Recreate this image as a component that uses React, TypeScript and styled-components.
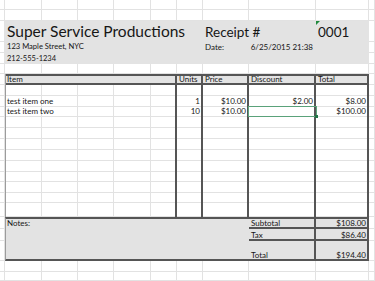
import { Fragment } from 'react'
import styled, { createGlobalStyle } from 'styled-components'

type Edge = 'thick' | 'thin'

type SpanProps = {
  $rows: string
  $cols: string
}

type RegionProps = SpanProps & {
  $shade?: boolean
  $top?: Edge
  $bottom?: Edge
  $left?: Edge
  $right?: Edge
}

type TextProps = SpanProps & {
  $align?: 'left' | 'right'
  $valign?: 'top' | 'bottom'
  $size?: number
}

const colWidths = [5, 37, 36, 36, 37, 26, 26, 46, 67, 53, 6]
const rowHeights = [10, 11, 21, 11, 11, 10, 11, 11, 11, 10, 11, 11, 11, 11, 11, 10, 11, 10, 14, 12, 12, 20, 11, 9]

const shade = '#e3e3e3'
const line = (e?: Edge) =>
  e === 'thick' ? '2px solid #555555' : e === 'thin' ? '1px solid #9c9c9c' : 'none'

const GlobalStyle = createGlobalStyle`
  html, body {
    margin: 0;
    padding: 0;
    background: #ffffff;
  }

  body {
    font-family: Lato, "Liberation Sans", sans-serif;
    color: #161616;
  }
`

const Sheet = styled.div`
  display: grid;
  grid-template-columns: ${colWidths.map((w) => `${w}px`).join(' ')};
  grid-template-rows: ${rowHeights.map((h) => `${h}px`).join(' ')};
  width: 375px;
  height: 281px;
  overflow: hidden;
  background: #ffffff;
`

const GridCell = styled.div<{ $row: number; $col: number }>`
  grid-row: ${(p) => p.$row};
  grid-column: ${(p) => p.$col};
  border-right: 1px solid #e2e2e2;
  border-bottom: 1px solid #e2e2e2;
`

const Region = styled.div<RegionProps>`
  grid-row: ${(p) => p.$rows};
  grid-column: ${(p) => p.$cols};
  background: ${(p) => (p.$shade ? shade : 'transparent')};
  border-top: ${(p) => line(p.$top)};
  border-bottom: ${(p) => line(p.$bottom)};
  border-left: ${(p) => line(p.$left)};
  border-right: ${(p) => line(p.$right)};
`

const SelectedCell = styled.div<SpanProps>`
  grid-row: ${(p) => p.$rows};
  grid-column: ${(p) => p.$cols};
  position: relative;
  border: 1px solid #5aa27a;
  margin: -1px -1px 0 -1px;
`

const FillHandle = styled.span`
  position: absolute;
  right: -2px;
  bottom: -2px;
  width: 3px;
  height: 3px;
  background: #217346;
`

const NumberCell = styled.div<SpanProps>`
  grid-row: ${(p) => p.$rows};
  grid-column: ${(p) => p.$cols};
  position: relative;
`

const TextFlag = styled.span`
  position: absolute;
  left: 0;
  top: 0;
  width: 0;
  height: 0;
  border-top: 4px solid #1f8a3c;
  border-right: 4px solid transparent;
`

const CellText = styled.div<TextProps>`
  grid-row: ${(p) => p.$rows};
  grid-column: ${(p) => p.$cols};
  display: flex;
  align-items: ${(p) => (p.$valign === 'top' ? 'flex-start' : 'flex-end')};
  justify-content: ${(p) => (p.$align === 'right' ? 'flex-end' : 'flex-start')};
  padding: ${(p) => (p.$valign === 'top' ? '2px 3px 0 2px' : '0 3px 2px 2px')};
  font-size: ${(p) => p.$size ?? 8}px;
  line-height: 1;
  white-space: nowrap;
  min-width: 0;
  z-index: 1;
`

const BigText = styled(CellText)`
  padding-bottom: 3px;
`

const items = [
  { row: 9, name: 'test item one', units: '1', price: '$10.00', discount: '$2.00', total: '$8.00' },
  { row: 10, name: 'test item two', units: '10', price: '$10.00', discount: '', total: '$100.00' },
]

const summary = [
  { row: 20, label: 'Subtotal', value: '$108.00' },
  { row: 21, label: 'Tax', value: '$86.40' },
  { row: 22, label: 'Total', value: '$194.40' },
]

function App() {
  const cells = []
  for (let r = 1; r <= rowHeights.length; r++) {
    for (let c = 1; c <= colWidths.length; c++) {
      cells.push(<GridCell key={`${r}-${c}`} $row={r} $col={c} />)
    }
  }

  return (
    <>
      <GlobalStyle />
      <Sheet>
        {cells}

        <Region $rows="3 / 6" $cols="2 / 11" $shade />
        <Region $rows="7 / 8" $cols="2 / 11" $shade $top="thick" $bottom="thick" />
        <Region $rows="20 / 23" $cols="2 / 9" $shade $top="thick" $bottom="thick" $left="thin" />
        {summary.map((s, i) => (
          <Region
            key={s.label}
            $rows={`${s.row} / ${s.row + 1}`}
            $cols="9 / 11"
            $shade
            $top={i === 0 ? 'thick' : undefined}
            $bottom="thick"
          />
        ))}

        <Region $rows="7 / 20" $cols="2 / 7" $left="thin" $right="thick" />
        <Region $rows="7 / 20" $cols="7 / 8" $right="thick" />
        <Region $rows="7 / 20" $cols="8 / 9" $right="thick" />
        <Region $rows="7 / 23" $cols="9 / 10" $right="thick" />
        <Region $rows="7 / 23" $cols="10 / 11" $right="thick" />

        <BigText $rows="3 / 4" $cols="2 / 8" $size={15.5}>Super Service Productions</BigText>
        <BigText $rows="3 / 4" $cols="8 / 10" $size={13.5}>Receipt #</BigText>
        <NumberCell $rows="3 / 4" $cols="10 / 11">
          <TextFlag />
        </NumberCell>
        <BigText $rows="3 / 4" $cols="10 / 12" $size={13.5}>0001</BigText>

        <CellText $rows="4 / 5" $cols="2 / 6" $size={7.6}>123 Maple Street, NYC</CellText>
        <CellText $rows="4 / 5" $cols="8 / 9">Date:</CellText>
        <CellText $rows="4 / 5" $cols="9 / 10" $align="right">6/25/2015 21:38</CellText>
        <CellText $rows="5 / 6" $cols="2 / 6" $size={7.5}>212-555-1234</CellText>

        <CellText $rows="7 / 8" $cols="2 / 7">Item</CellText>
        <CellText $rows="7 / 8" $cols="7 / 8">Units</CellText>
        <CellText $rows="7 / 8" $cols="8 / 9">Price</CellText>
        <CellText $rows="7 / 8" $cols="9 / 10">Discount</CellText>
        <CellText $rows="7 / 8" $cols="10 / 11">Total</CellText>

        {items.map((it) => {
          const rows = `${it.row} / ${it.row + 1}`
          return (
            <Fragment key={it.name}>
              <CellText $rows={rows} $cols="2 / 7">{it.name}</CellText>
              <CellText $rows={rows} $cols="7 / 8" $align="right">{it.units}</CellText>
              <CellText $rows={rows} $cols="8 / 9" $align="right">{it.price}</CellText>
              <CellText $rows={rows} $cols="9 / 10" $align="right">{it.discount}</CellText>
              <CellText $rows={rows} $cols="10 / 11" $align="right">{it.total}</CellText>
            </Fragment>
          )
        })}

        <SelectedCell $rows="10 / 11" $cols="9 / 10">
          <FillHandle />
        </SelectedCell>

        <CellText $rows="20 / 21" $cols="2 / 9" $valign="top">Notes:</CellText>
        {summary.map((s) => {
          const rows = `${s.row} / ${s.row + 1}`
          return (
            <Fragment key={s.label}>
              <CellText $rows={rows} $cols="9 / 10">{s.label}</CellText>
              <CellText $rows={rows} $cols="10 / 11" $align="right">{s.value}</CellText>
            </Fragment>
          )
        })}
      </Sheet>
    </>
  )
}

export default App
